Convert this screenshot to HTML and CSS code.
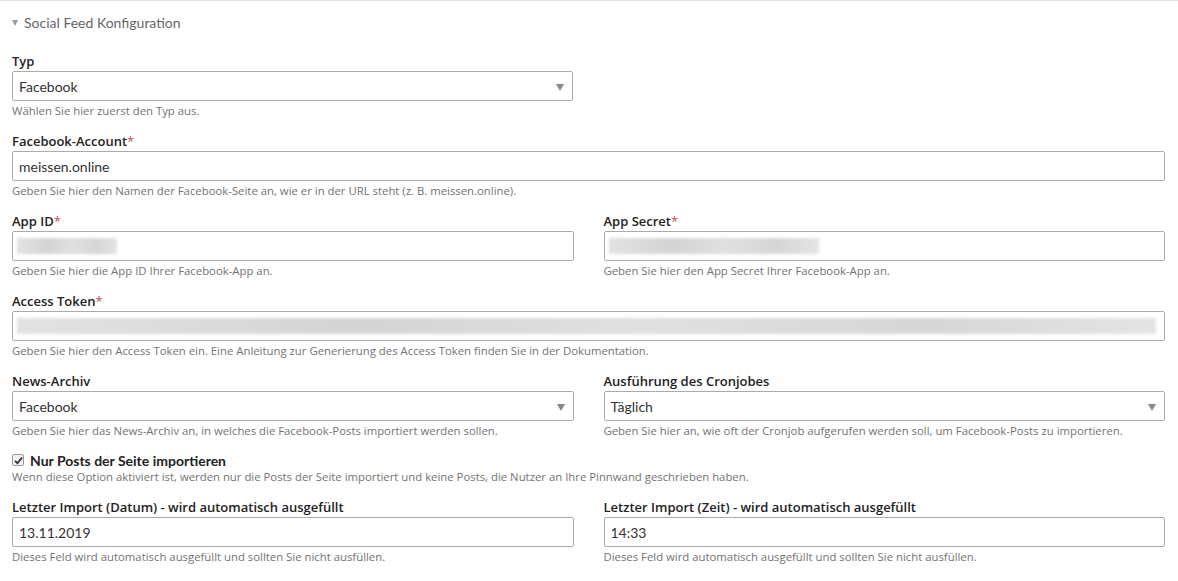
FILE: index.html
```html
<!DOCTYPE html>
<html lang="de">
<head>
<meta charset="utf-8">
<title>Social Feed Konfiguration</title>
<link rel="stylesheet" href="styles.css">
</head>
<body>
<div class="panel">
  <div class="legend"><span class="caret"></span>Social Feed Konfiguration</div>
  <div class="form">
    <div class="row">
      <div class="field half">
        <label class="lbl">Typ</label>
        <div class="select">Facebook<span class="arrow"></span></div>
        <div class="help">Wählen Sie hier zuerst den Typ aus.</div>
      </div>
    </div>
    <div class="row">
      <div class="field full">
        <label class="lbl">Facebook-Account<span class="req">*</span></label>
        <div class="input">meissen.online</div>
        <div class="help">Geben Sie hier den Namen der Facebook-Seite an, wie er in der URL steht (z. B. meissen.online).</div>
      </div>
    </div>
    <div class="row two">
      <div class="field">
        <label class="lbl">App ID<span class="req">*</span></label>
        <div class="input"><span class="blur" style="width:100px"></span></div>
        <div class="help">Geben Sie hier die App ID Ihrer Facebook-App an.</div>
      </div>
      <div class="field">
        <label class="lbl">App Secret<span class="req">*</span></label>
        <div class="input"><span class="blur" style="width:210px"></span></div>
        <div class="help">Geben Sie hier den App Secret Ihrer Facebook-App an.</div>
      </div>
    </div>
    <div class="row">
      <div class="field full">
        <label class="lbl">Access Token<span class="req">*</span></label>
        <div class="input"><span class="blur wide"></span></div>
        <div class="help">Geben Sie hier den Access Token ein. Eine Anleitung zur Generierung des Access Token finden Sie in der Dokumentation.</div>
      </div>
    </div>
    <div class="row two">
      <div class="field">
        <label class="lbl">News-Archiv</label>
        <div class="select">Facebook<span class="arrow"></span></div>
        <div class="help">Geben Sie hier das News-Archiv an, in welches die Facebook-Posts importiert werden sollen.</div>
      </div>
      <div class="field">
        <label class="lbl">Ausführung des Cronjobes</label>
        <div class="select">Täglich<span class="arrow"></span></div>
        <div class="help">Geben Sie hier an, wie oft der Cronjob aufgerufen werden soll, um Facebook-Posts zu importieren.</div>
      </div>
    </div>
    <div class="row">
      <div class="field check">
        <div class="checkline">
          <span class="cbox"><svg width="9" height="9" viewBox="0 0 9 9"><path d="M1 4.8 L3.4 7.2 L8 1.6" fill="none" stroke="#333" stroke-width="1.8"/></svg></span>
          <span class="clabel">Nur Posts der Seite importieren</span>
        </div>
        <div class="help tight">Wenn diese Option aktiviert ist, werden nur die Posts der Seite importiert und keine Posts, die Nutzer an Ihre Pinnwand geschrieben haben.</div>
      </div>
    </div>
    <div class="row two">
      <div class="field">
        <label class="lbl">Letzter Import (Datum) - wird automatisch ausgefüllt</label>
        <div class="input">13.11.2019</div>
        <div class="help">Dieses Feld wird automatisch ausgefüllt und sollten Sie nicht ausfüllen.</div>
      </div>
      <div class="field">
        <label class="lbl">Letzter Import (Zeit) - wird automatisch ausgefüllt</label>
        <div class="input">14:33</div>
        <div class="help">Dieses Feld wird automatisch ausgefüllt und sollten Sie nicht ausfüllen.</div>
      </div>
    </div>
  </div>
</div>
</body>
</html>
```
FILE: styles.css
```css
html, body {
  margin: 0;
  padding: 0;
  background: #fff;
}
body {
  font-family: "Lato", "Open Sans", sans-serif;
  color: #222;
}
.panel {
  border-top: 1px solid #e3e3e3;
}
.legend {
  display: flex;
  align-items: center;
  height: 20px;
  margin-top: 11px;
  padding-left: 12px;
  font-size: 14px;
  color: #666;
}
.caret {
  width: 0;
  height: 0;
  border-left: 3.5px solid transparent;
  border-right: 3.5px solid transparent;
  border-top: 6px solid #9a9a9a;
  margin-right: 6px;
  margin-top: 1px;
}
.form {
  padding: 19px 13px 0 12px;
  display: flex;
  flex-direction: column;
  gap: 10px;
}
.row {
  display: grid;
  grid-template-columns: 1fr;
}
.row.two {
  grid-template-columns: 1fr 1fr;
  column-gap: 30px;
}
.field.half {
  width: 561px;
}
.lbl {
  display: block;
  height: 20px;
  line-height: 20px;
  font-family: "Open Sans", "Lato", sans-serif;
  font-size: 13px;
  font-weight: 600;
  color: #222;
}
.req {
  color: #c74b4b;
  font-weight: 400;
}
.input, .select {
  position: relative;
  box-sizing: border-box;
  height: 30px;
  border: 1px solid #ababab;
  border-radius: 2px;
  padding: 0 6px;
  display: flex;
  align-items: center;
  font-size: 14px;
  color: #333;
}
.arrow {
  position: absolute;
  right: 8px;
  top: 12px;
  width: 0;
  height: 0;
  border-left: 4px solid transparent;
  border-right: 4px solid transparent;
  border-top: 7px solid #888;
}
.blur {
  display: block;
  height: 16px;
  margin-left: -2px;
  background: linear-gradient(90deg, #e2e2e2 0%, #d4d4d4 30%, #e0e0e0 55%, #d6d6d6 80%, #e4e4e4 100%);
  filter: blur(1.5px);
}
.blur.wide {
  width: 100%;
  margin-left: -2px;
  margin-right: -2px;
}
.help {
  height: 20px;
  line-height: 20px;
  font-family: "Open Sans", "Lato", sans-serif;
  font-size: 11.35px;
  color: #737373;
  white-space: nowrap;
}
.help.tight {
  height: 16px;
  line-height: 16px;
}
.checkline {
  display: flex;
  align-items: center;
  height: 18px;
}
.cbox {
  box-sizing: border-box;
  width: 12px;
  height: 12px;
  border: 1px solid #9a9a9a;
  border-radius: 2px;
  background: #f0f0f0;
  display: flex;
  align-items: center;
  justify-content: center;
  margin-right: 6px;
}
.cbox svg {
  display: block;
}
.clabel {
  font-size: 14px;
  font-weight: 700;
  color: #222;
}
.field.check {
  margin-bottom: 2px;
}
```
